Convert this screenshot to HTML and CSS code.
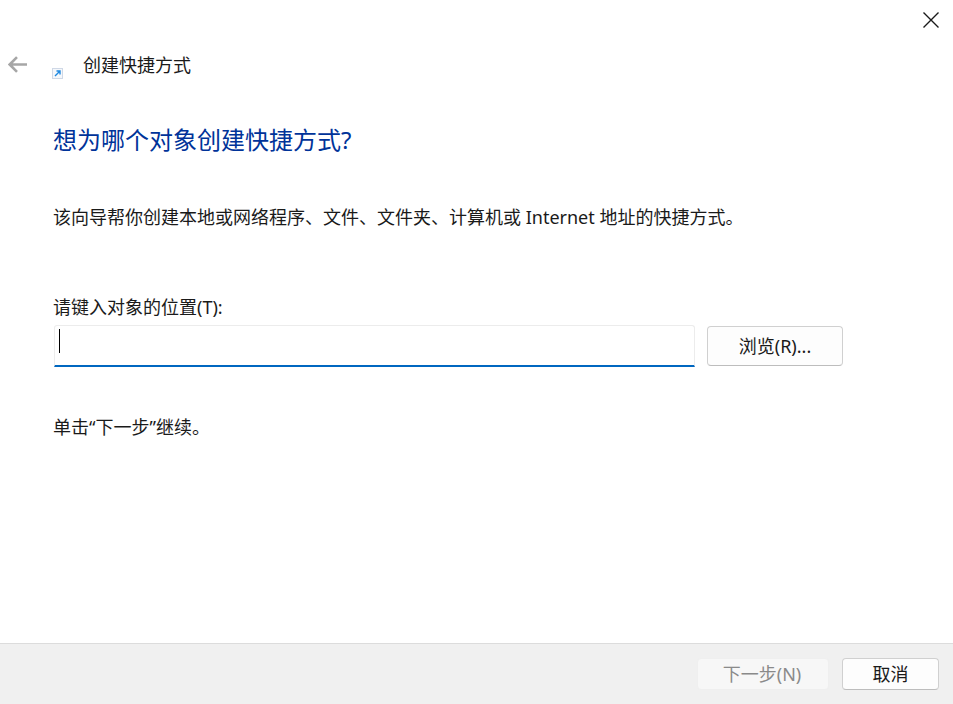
FILE: index.html
```html
<!DOCTYPE html>
<html lang="zh-CN">
<head>
<meta charset="utf-8">
<title>创建快捷方式</title>
<link rel="stylesheet" href="styles.css">
</head>
<body>
<div class="window">
  <div class="close-row">
    <svg class="close-icon" width="18" height="18" viewBox="0 0 18 18"><path d="M1.5 1.5 16.5 16.5M16.5 1.5 1.5 16.5" stroke="#1a1a1a" stroke-width="1.4" fill="none"/></svg>
  </div>
  <div class="nav-row">
    <svg class="back-icon" width="20" height="18" viewBox="0 0 20 18"><path d="M19 8.5H2.5M9 1.2 1.7 8.5l7.3 7.3" stroke="#a6a6a6" stroke-width="2.6" fill="none"/></svg>
    <svg class="app-icon" width="11" height="11" viewBox="0 0 11 11"><rect x=".5" y=".5" width="10" height="10" fill="#f4f7fb" stroke="#cfd8e6"/><path d="M3 8 7.5 3.5M4.5 3H8v3.5" stroke="#1e88e0" stroke-width="1.4" fill="none"/></svg>
    <span class="nav-title">创建快捷方式</span>
  </div>
  <main class="content">
    <h1 class="heading">想为哪个对象创建快捷方式?</h1>
    <p class="intro">该向导帮你创建本地或网络程序、文件、文件夹、计算机或 Internet 地址的快捷方式。</p>
    <label class="field-label">请键入对象的位置(T):</label>
    <div class="field-row">
      <div class="input"><span class="caret"></span></div>
      <button class="btn browse">浏览(R)...</button>
    </div>
    <p class="hint">单击“下一步”继续。</p>
  </main>
  <footer class="footer">
    <button class="btn next" disabled>下一步(N)</button>
    <button class="btn cancel">取消</button>
  </footer>
</div>
</body>
</html>
```
FILE: styles.css
```css
* { box-sizing: border-box; }
html, body { margin: 0; height: 100%; }
body {
  background: #fff;
  color: #1a1a1a;
  font-family: "Noto Sans", "Noto Sans CJK SC", sans-serif;
  font-size: 18px;
  overflow: hidden;
}
.window { width: 953px; height: 704px; display: flex; flex-direction: column; }
.close-row { height: 29px; padding: 11px 13px 0 0; display: flex; justify-content: flex-end; flex: none; }
.close-icon { display: block; }
.nav-row { height: 45px; padding: 0 0 0 8px; display: flex; align-items: flex-start; flex: none; }
.back-icon { margin-top: 27px; display: block; }
.app-icon { margin: 39px 0 0 24px; display: block; }
.nav-title { margin: 24px 0 0 20px; line-height: 24px; color: #1a1a1a; }
.content { flex: 1; padding: 49px 0 0 54px; }
.heading { margin: 0 0 0 -1px; font-size: 24px; font-weight: 400; line-height: 34px; color: #003399; }
.intro { margin: 47px 0 0 -1px; line-height: 26px; }
.field-label { display: block; margin: 64px 0 0 -1px; line-height: 26px; }
.field-row { display: flex; align-items: center; gap: 12px; margin-top: 5px; }
.input { width: 641px; height: 42px; background: #fff; border: 1px solid #ececec; border-bottom: 2px solid #0067c0; border-radius: 3px 3px 0 0; padding: 3px 0 0 4px; }
.caret { display: block; width: 1px; height: 24px; background: #000; }
.btn { font: inherit; color: #1a1a1a; background: #fdfdfd; border: 1px solid #d0d0d0; border-bottom-color: #bdbdbd; border-radius: 4px; padding: 0; line-height: 1; }
.browse { width: 136px; height: 40px; }
.hint { margin: 47px 0 0 -1px; line-height: 26px; }
.footer { flex: none; height: 61px; background: #f0f0f0; border-top: 1px solid #dcdcdc; padding: 14px 14px 0 0; display: flex; justify-content: flex-end; gap: 13px; }
.next { width: 132px; height: 32px; padding-right: 2px; background: #f7f7f7; border-color: #efefef; color: #8a8a8a; }
.cancel { width: 97px; height: 32px; }
```
